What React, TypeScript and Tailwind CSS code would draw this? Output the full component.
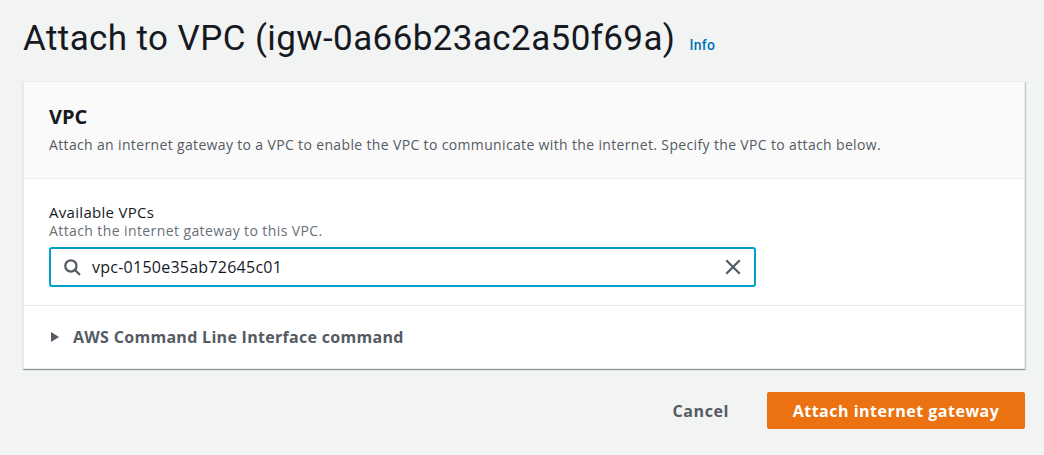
import React, { useState } from 'react';

export default function App() {
  const [value, setValue] = useState('vpc-0150e35ab72645c01');

  return (
    <div className="min-h-[455px] bg-[#f2f3f3] px-[23px] pt-[12px] font-['Open_Sans',sans-serif] text-[#16191f]">
      <header className="flex items-baseline h-[54px]">
        <h1 className="font-['Roboto',sans-serif] text-[35px] leading-[54px] font-normal tracking-[0.4px]">
          Attach to VPC (igw-0a66b23ac2a50f69a)
        </h1>
        <a className="ml-[14px] font-['Roboto',sans-serif] text-[14px] font-medium tracking-[0.3px] text-[#0073bb]">Info</a>
      </header>

      <section className="mt-[15px] w-[1002px] bg-white border border-[#eaeded] shadow-[0_1px_1px_0_rgba(0,28,36,0.3),1px_1px_1px_0_rgba(0,28,36,0.15)]">
        {/* Container header */}
        <div className="bg-[#fafafa] border-b border-[#eaeded] px-[25px] pt-[21px] pb-[23px]">
          <h2 className="text-[20px] leading-[28px] font-bold">VPC</h2>
          <p className="mt-[4px] text-[14px] leading-[20px] tracking-[0.35px] text-[#545b64]">
            Attach an internet gateway to a VPC to enable the VPC to communicate with the internet. Specify the VPC to attach below.
          </p>
        </div>

        {/* Form field */}
        <div className="border-b border-[#eaeded] px-[25px] pt-[23px] pb-[18px]">
          <label className="block text-[15px] leading-[20px] tracking-[0.3px]">Available VPCs</label>
          <p className="text-[14px] leading-[18px] tracking-[0.4px] text-[#687078]">Attach the internet gateway to this VPC.</p>
          <div className="mt-[7px] w-[707px] h-[40px] flex items-center rounded-[3px] border-2 border-[#00a1c9] px-[12px]">
            <svg width="18" height="18" viewBox="0 0 16 16" className="text-[#545b64] shrink-0">
              <circle cx="7" cy="7" r="5" fill="none" stroke="currentColor" strokeWidth="2" />
              <path d="M10.5 10.5 L14.5 14.5" stroke="currentColor" strokeWidth="2" strokeLinecap="round" />
            </svg>
            <input
              value={value}
              onChange={(e) => setValue(e.target.value)}
              className="ml-[11px] flex-1 outline-none bg-transparent text-[16px] tracking-[0.25px] text-[#16191f] font-['Open_Sans',sans-serif]"
            />
            <button onClick={() => setValue('')} className="text-[#545b64]">
              <svg width="18" height="18" viewBox="0 0 16 16">
                <path d="M2 2 L14 14 M14 2 L2 14" stroke="currentColor" strokeWidth="2" />
              </svg>
            </button>
          </div>
        </div>

        {/* Expandable section */}
        <div className="px-[26px] h-[62px] flex items-center">
          <svg width="10" height="12" viewBox="0 0 10 12" className="text-[#545b64]">
            <path d="M1 1 L9 6 L1 11 Z" fill="currentColor" />
          </svg>
          <span className="ml-[13px] text-[16px] font-bold tracking-[0.3px] text-[#545b64]">AWS Command Line Interface command</span>
        </div>
      </section>

      <div className="mt-[23px] w-[1002px] flex justify-end items-center">
        <button className="text-[16px] font-bold tracking-[0.6px] text-[#545b64] px-[20px] h-[37px]">Cancel</button>
        <button className="ml-[18px] w-[258px] h-[37px] rounded-[2px] bg-[#ec7211] text-white text-[16px] font-bold tracking-[0.5px]">
          Attach internet gateway
        </button>
      </div>
    </div>
  );
}
